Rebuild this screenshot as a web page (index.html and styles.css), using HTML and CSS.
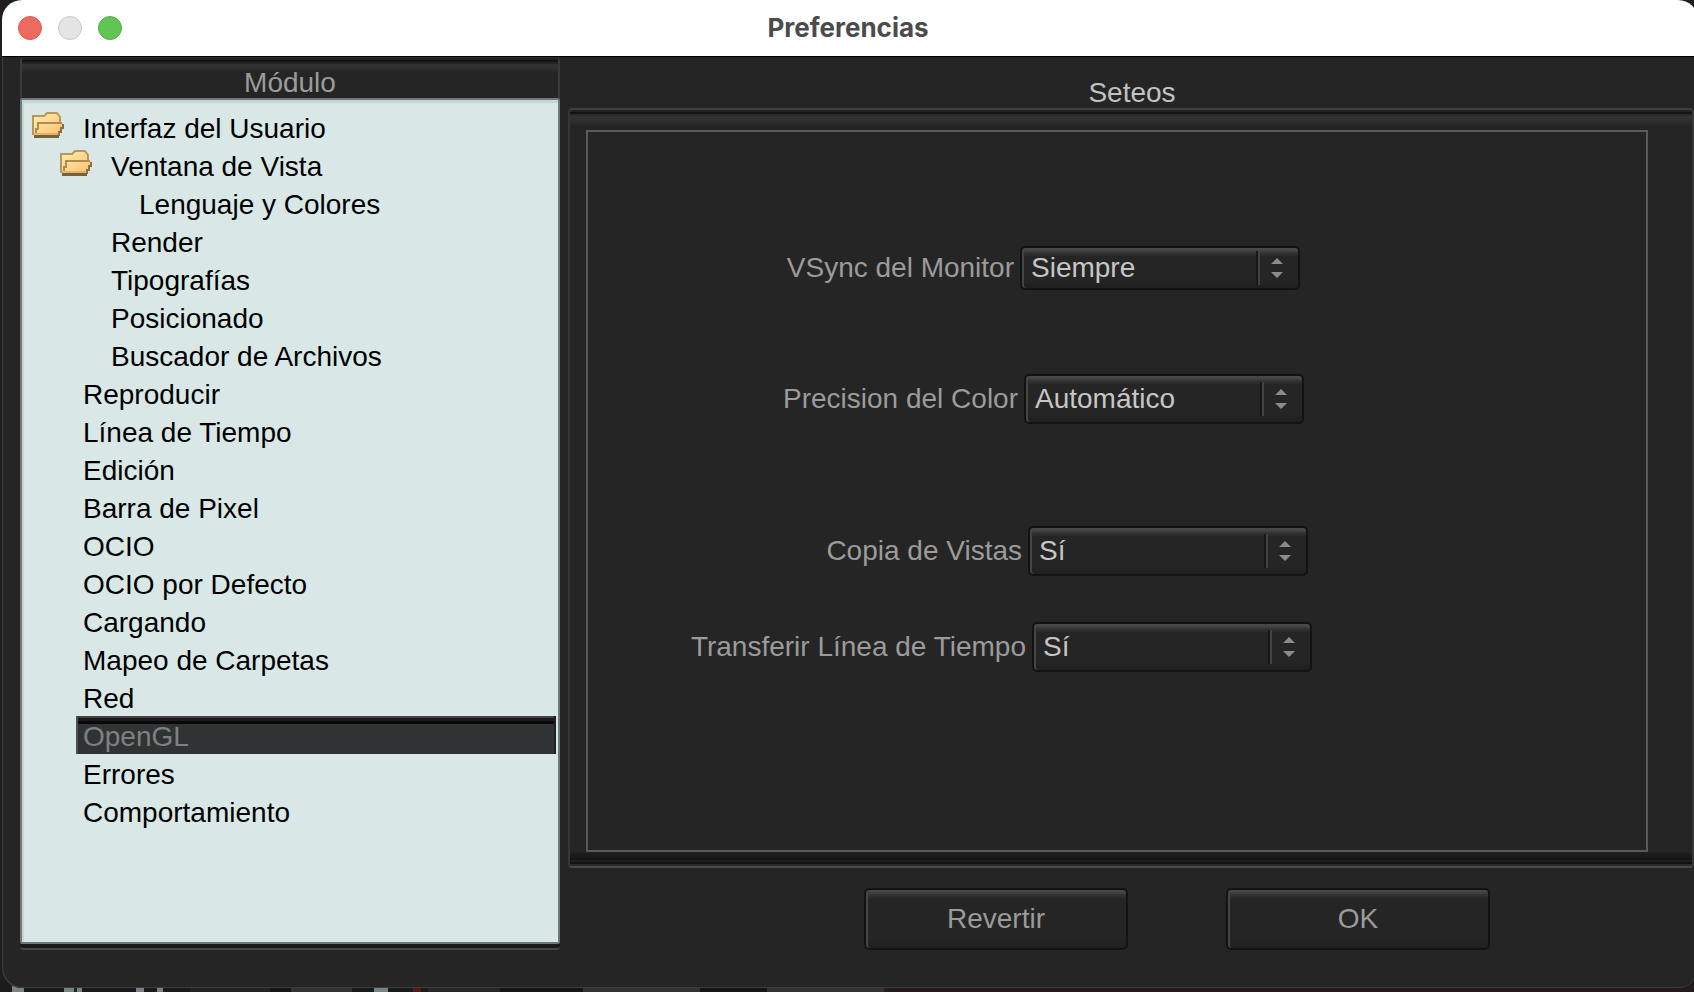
FILE: index.html
```html
<!DOCTYPE html>
<html lang="es">
<head>
<meta charset="utf-8">
<title>Preferencias</title>
<link rel="stylesheet" href="styles.css">
</head>
<body>
<svg class="defs" aria-hidden="true">
  <defs>
    <linearGradient id="folder-fill" x1="0" y1="0" x2="1" y2="1">
      <stop offset="0" stop-color="#fff0a8"/>
      <stop offset="1" stop-color="#fbbf74"/>
    </linearGradient>
    <symbol id="folder" viewBox="0 0 32 26">
      <path d="M1 23V5l2-2h10l3-2h8l4 4v5h2l1 3-4 10z" fill="url(#folder-fill)"/>
      <path d="M1 23V4h11l3-3h10l3 4v5" fill="none" stroke="#bb955f" stroke-width="2"/>
      <path d="M4 21v-4h2v-6h24" fill="none" stroke="#b08a57" stroke-width="2"/>
      <path d="M31 12v4h-2v4h-2v4" fill="none" stroke="#8a6c45" stroke-width="2"/>
      <path d="M2 23h25v3H2z" fill="#77603f"/>
      <path d="M2 22h25" stroke="#c9994f" stroke-width="1"/>
    </symbol>
    <symbol id="arrows" viewBox="0 0 12 20">
      <path d="M6 0l6 6H0zM0 14h12l-6 6z" fill="#8c8c8c"/>
    </symbol>
  </defs>
</svg>
<div class="window">
  <header class="titlebar">
    <div class="lights">
      <button class="light close" aria-label="Cerrar"></button>
      <button class="light minimize" aria-label="Minimizar" disabled></button>
      <button class="light maximize" aria-label="Ampliar"></button>
    </div>
    <h1 class="title">Preferencias</h1>
  </header>
  <div class="content">
    <nav class="sidebar" aria-labelledby="module-title">
      <h2 class="module-title" id="module-title">Módulo</h2>
      <ul class="tree">
        <li class="item"><svg class="folder"><use href="#folder"/></svg><a class="link" href="#">Interfaz del Usuario</a></li>
        <li class="item level-2"><svg class="folder"><use href="#folder"/></svg><a class="link" href="#">Ventana de Vista</a></li>
        <li class="item level-3"><a class="link" href="#">Lenguaje y Colores</a></li>
        <li class="item level-2"><a class="link" href="#">Render</a></li>
        <li class="item level-2"><a class="link" href="#">Tipografías</a></li>
        <li class="item level-2"><a class="link" href="#">Posicionado</a></li>
        <li class="item level-2"><a class="link" href="#">Buscador de Archivos</a></li>
        <li class="item"><a class="link" href="#">Reproducir</a></li>
        <li class="item"><a class="link" href="#">Línea de Tiempo</a></li>
        <li class="item"><a class="link" href="#">Edición</a></li>
        <li class="item"><a class="link" href="#">Barra de Pixel</a></li>
        <li class="item"><a class="link" href="#">OCIO</a></li>
        <li class="item"><a class="link" href="#">OCIO por Defecto</a></li>
        <li class="item"><a class="link" href="#">Cargando</a></li>
        <li class="item"><a class="link" href="#">Mapeo de Carpetas</a></li>
        <li class="item"><a class="link" href="#">Red</a></li>
        <li class="item"><a class="link selected" href="#" aria-current="page">OpenGL</a></li>
        <li class="item"><a class="link" href="#">Errores</a></li>
        <li class="item"><a class="link" href="#">Comportamiento</a></li>
      </ul>
    </nav>
    <main class="settings">
      <h2 class="settings-title">Seteos</h2>
      <div class="group">
        <form class="form">
          <div class="row">
            <label class="label" for="vsync">VSync del Monitor</label>
            <div class="picker">
              <select class="select short" id="vsync"><option>Siempre</option></select>
              <span class="stepper"><svg class="arrows"><use href="#arrows"/></svg></span>
            </div>
          </div>
          <div class="row precision">
            <label class="label" for="precision">Precision del Color</label>
            <div class="picker">
              <select class="select" id="precision"><option>Automático</option></select>
              <span class="stepper"><svg class="arrows"><use href="#arrows"/></svg></span>
            </div>
          </div>
          <div class="row views">
            <label class="label" for="views">Copia de Vistas</label>
            <div class="picker">
              <select class="select" id="views"><option>Sí</option></select>
              <span class="stepper"><svg class="arrows"><use href="#arrows"/></svg></span>
            </div>
          </div>
          <div class="row timeline">
            <label class="label" for="timeline">Transferir Línea de Tiempo</label>
            <div class="picker">
              <select class="select" id="timeline"><option>Sí</option></select>
              <span class="stepper"><svg class="arrows"><use href="#arrows"/></svg></span>
            </div>
          </div>
        </form>
      </div>
      <div class="actions">
        <button class="button" type="button">Revertir</button>
        <button class="button" type="button">OK</button>
      </div>
    </main>
  </div>
</div>
</body>
</html>
```
FILE: styles.css
```css
* { box-sizing: border-box; }

body {
  margin: 0;
  min-height: 100vh;
  display: flex;
  overflow: hidden;
  padding: 0 0 4px 2px;
  font: 28px/32px "Liberation Sans", Arial, sans-serif;
  color: #9b9b9b;
  background:
    linear-gradient(90deg,
      #1c1c1c 12px, #788486 12px 24px, #1a1a1a 24px 64px, #788486 64px 74px,
      #222 74px 77px, #788486 77px 82px, #1a1a1a 82px 136px, #788486 136px 144px,
      #1a1a1a 144px 157px, #788486 157px 163px, #1a1a1a 163px 190px, #242424 190px 270px,
      #151515 270px 291px, #303434 291px 352px, #1a1a1a 352px 374px, #788486 374px 388px,
      #1a1a1a 388px 413px, #571818 413px 421px, #1a1a1a 421px 428px, #272727 428px 500px,
      #151515 500px 583px, #303434 583px 700px, #151515 700px 767px, #303434 767px 884px,
      #241b1e 884px) bottom / 100% 12px no-repeat,
    #211d1e;
}

.defs { position: absolute; width: 0; height: 0; }

h1, h2, ul { margin: 0; padding: 0; font-weight: 400; font-size: 28px; }

.window {
  flex: 1;
  margin-right: -4px;
  display: flex;
  flex-direction: column;
  border-radius: 20px;
  overflow: hidden;
  background: #252525;
  box-shadow: inset 1px -1px #3c3c3c, inset -1px 0 #3c3c3c;
}

.titlebar {
  display: grid;
  grid-template-columns: 1fr auto 1fr;
  align-items: center;
  height: 57px;
  padding: 0 20px 0 16px;
  background: #fff;
  border-bottom: 1px solid #000;
}

.title { font: 700 26px/32px Inter, sans-serif; color: #4b4b4b; }

.lights { display: flex; gap: 16px; }

.light {
  width: 24px;
  height: 24px;
  padding: 0;
  border-radius: 50%;
  border: 1px solid;
}
.close { background: #ec6a5e; border-color: #dc5a4f; }
.minimize { background: #e5e5e5; border-color: #c6c6c6; }
.maximize { background: #61c554; border-color: #52b044; }

.content {
  flex: 1;
  display: flex;
  gap: 8px;
  padding: 0 4px 38px 18px;
}

.sidebar {
  flex: 0 0 540px;
  display: flex;
  flex-direction: column;
  border-radius: 4px;
  border-bottom: 2px solid #484848;
  background: #1a1a1a;
  padding-bottom: 4px;
}

.module-title {
  padding-top: 11px;
  line-height: 30px;
  text-align: center;
  border: solid #3a3a3a;
  border-width: 0 2px;
  border-radius: 4px 4px 0 0;
  background: linear-gradient(#2e2e2e 1px, #1f1f1f 1px 3px, #141414 3px 5px, #242424 5px 7px, #333 7px, #303030 11px, #252525 16px);
}

.tree {
  flex: 1;
  list-style: none;
  padding: 8px 2px 8px 10px;
  border: 2px solid #6d7877;
  border-radius: 2px;
  background: #d9e8e7;
  box-shadow: inset 2px 3px 1px #c6d5d4;
}

.item { display: flex; position: relative; padding-left: 44px; }
.level-2 { padding-left: 72px; }
.level-3 { padding-left: 100px; }

.folder { position: absolute; top: 4px; left: 0; width: 32px; height: 26px; }
.level-2 .folder { left: 28px; }

.link {
  flex: 1;
  padding: 4px 0 0 7px;
  line-height: 34px;
  color: #000;
  text-decoration: none;
}

.selected {
  color: #808080;
  border-left: 2px solid #4b5050;
  border-right: 2px solid #202222;
  padding-left: 5px;
  background: linear-gradient(#414343 2px, #1a1a1a 2px 5px, #080808 5px 8px, #2f3334 8px);
}

.settings { flex: 1; display: flex; flex-direction: column; }

.settings-title { padding: 21px 0 0 2px; line-height: 30px; text-align: center; color: #c2c2c2; }

.group {
  flex: 1;
  display: flex;
  padding: 20px 44px 14px 16px;
  border: 2px solid #363636;
  border-top-color: #404040;
  border-bottom-color: #4a4a4a;
  border-radius: 4px;
  background:
    linear-gradient(#232323 2px, #141414 2px 4px, #292929 4px 6px, #333 6px, #2f2f2f 10px, #242424 17px) top / 100% 20px no-repeat,
    linear-gradient(#212121, #131313 8px, #1e1e1e 8px 10px, #121212 10px 12px, #2a2a2a 12px) bottom / 100% 14px no-repeat;
}

.form {
  flex: 1;
  padding-top: 114px;
  border: 2px solid #5a5a5a;
  background: #252525;
}

.row { display: flex; align-items: center; gap: 6px; }
.precision { margin-top: 84px; padding-left: 4px; }
.views { margin-top: 102px; padding-left: 8px; }
.timeline { margin-top: 46px; padding-left: 12px; }

.label { flex: 0 0 426px; text-align: right; }

.picker { position: relative; }

.select, .button {
  font: inherit;
  border: 2px solid #131313;
  border-radius: 5px;
  background: linear-gradient(#484848 2px, #404040 2px 4px, #333 4px 6px, #2c2c2c 6px 8px, #252525 8px, #252525 calc(100% - 8px), #1f1f1f);
  box-shadow: inset 2px 0 #454545;
}

.select {
  display: block;
  appearance: none;
  width: 280px;
  height: 50px;
  padding: 0 52px 0 9px;
  color: #c6c6c6;
}
.short { height: 44px; }

.stepper {
  position: absolute;
  top: 0;
  bottom: 0;
  right: 17px;
  height: 34px;
  margin: auto 0;
  padding: 7px 0 7px 13px;
  border-left: 2px solid #171717;
  box-shadow: inset 2px 0 #434343;
  pointer-events: none;
}

.arrows { display: block; width: 12px; height: 20px; }

.actions { display: flex; gap: 98px; padding: 20px 0 0 296px; }

.button { width: 264px; height: 62px; color: #9b9b9b; }
```
